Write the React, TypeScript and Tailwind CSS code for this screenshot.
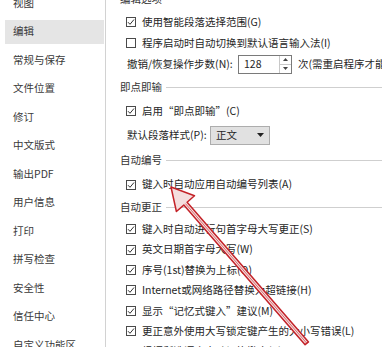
import React from "react";

const sideItems = [
  "视图",
  "编辑",
  "常规与保存",
  "文件位置",
  "修订",
  "中文版式",
  "输出PDF",
  "用户信息",
  "打印",
  "拼写检查",
  "安全性",
  "信任中心",
  "自定义功能区",
];

function Box({ checked }: { checked: boolean }) {
  return (
    <div className="w-[10px] h-[10px] shrink-0 border border-[#4a4a4a] bg-white flex items-center justify-center">
      {checked && (
        <svg width="8" height="8" viewBox="0 0 8 8">
          <path d="M1 4.2 L3 6.3 L7 1.5" fill="none" stroke="#333" strokeWidth="1" />
        </svg>
      )}
    </div>
  );
}

function CheckRow({ checked, label, h }: { checked: boolean; label: string; h: string }) {
  return (
    <div className={`${h} shrink-0 flex items-center pl-[20px] gap-[6px] whitespace-nowrap`}>
      <Box checked={checked} />
      <span>{label}</span>
    </div>
  );
}

function Header({ label, h, extra }: { label: string; h: string; extra?: string }) {
  return (
    <div className={`${h} ${extra ?? ""} shrink-0 flex items-center pl-[14px] whitespace-nowrap`}>
      <span className="text-[#333]">{label}</span>
      <div className="flex-1 h-px bg-[#cfcfcf] ml-[4px]" />
    </div>
  );
}

export default function App() {
  return (
    <div className="w-[382px] h-[347px] overflow-hidden bg-white relative flex font-['Noto_Sans_CJK_SC',sans-serif] text-[10.5px] text-[#262626] leading-none">
      {/* sidebar */}
      <div className="w-[106px] shrink-0 border-r border-[#d2d2d2] overflow-hidden">
        <div className="flex flex-col gap-[4.5px] mt-[-9px]">
          {sideItems.map((s) => (
            <div
              key={s}
              className={`h-[24px] ml-[5px] w-[99px] flex items-center pl-[8px] text-[#3a3a3a] whitespace-nowrap ${
                s === "编辑" ? "bg-[#e5e5e5]" : ""
              }`}
            >
              {s}
            </div>
          ))}
        </div>
      </div>

      {/* right panel */}
      <div className="flex-1 flex flex-col overflow-hidden">
        <Header label="编辑选项" h="h-[24px]" extra="mt-[-13px]" />
        <CheckRow checked label="使用智能段落选择范围(G)" h="h-[22px]" />
        <CheckRow checked={false} label="程序启动时自动切换到默认语言输入法(I)" h="h-[20px]" />
        <div className="h-[22px] shrink-0 flex items-center pl-[21px] whitespace-nowrap">
          <span className="w-[111px] shrink-0">撤销/恢复操作步数(N):</span>
          <div className="w-[54px] h-[19px] shrink-0 border border-[#7a7a7a] flex bg-white">
            <div className="flex-1 flex items-center pl-[5px]">128</div>
            <div className="w-[12px] border-l border-[#c8c8c8] flex flex-col">
              <div className="flex-1 flex items-center justify-center border-b border-[#c8c8c8]">
                <svg width="5" height="3" viewBox="0 0 5 3">
                  <path d="M0 3 L2.5 0 L5 3 Z" fill="#444" />
                </svg>
              </div>
              <div className="flex-1 flex items-center justify-center">
                <svg width="5" height="3" viewBox="0 0 5 3">
                  <path d="M0 0 L2.5 3 L5 0 Z" fill="#444" />
                </svg>
              </div>
            </div>
          </div>
          <span className="ml-[6px]">次(需重启程序才能生效)</span>
        </div>
        <Header label="即点即输" h="h-[25px]" />
        <CheckRow checked label="启用“即点即输”(C)" h="h-[22px]" />
        <div className="h-[26px] shrink-0 flex items-center pl-[21px] whitespace-nowrap">
          <span className="w-[83px] shrink-0">默认段落样式(P):</span>
          <div className="w-[60px] h-[19px] shrink-0 bg-[#e1e1e1] border border-[#adadad] flex items-center pl-[5px]">
            <span>正文</span>
            <svg className="ml-auto mr-[5px]" width="7" height="4" viewBox="0 0 7 4">
              <path d="M0 0 L3.5 4 L7 0 Z" fill="#222" />
            </svg>
          </div>
        </div>
        <Header label="自动编号" h="h-[25px]" />
        <CheckRow checked label="键入时自动应用自动编号列表(A)" h="h-[23px]" />
        <Header label="自动更正" h="h-[23px]" />
        <CheckRow checked label="键入时自动进行句首字母大写更正(S)" h="h-[20.4px]" />
        <CheckRow checked label="英文日期首字母大写(W)" h="h-[20.4px]" />
        <CheckRow checked label="序号(1st)替换为上标(O)" h="h-[20.4px]" />
        <CheckRow checked label="Internet或网络路径替换为超链接(H)" h="h-[20.4px]" />
        <CheckRow checked label="显示“记忆式键入”建议(M)" h="h-[20.4px]" />
        <CheckRow checked label="更正意外使用大写锁定键产生的大小写错误(L)" h="h-[20.4px]" />
        <CheckRow checked label="根据所选语言自动切换键盘(K)" h="h-[20.4px]" />
      </div>

      {/* red arrow overlay */}
      <svg
        className="absolute inset-0 pointer-events-none"
        width="382"
        height="347"
        viewBox="0 0 382 347"
      >
        <polygon
          points="171,187 194.5,195.7 187.1,202.2 308.5,341.9 305.1,344.7 183.8,205.1 176.4,211.5"
          fill="#f4dede"
          stroke="#c42228"
          strokeWidth="1.5"
          strokeLinejoin="round"
        />
        <line x1="185.4" y1="203.6" x2="306.8" y2="343.3" stroke="#c42228" strokeWidth="1" strokeOpacity="0.6" />
      </svg>
    </div>
  );
}
